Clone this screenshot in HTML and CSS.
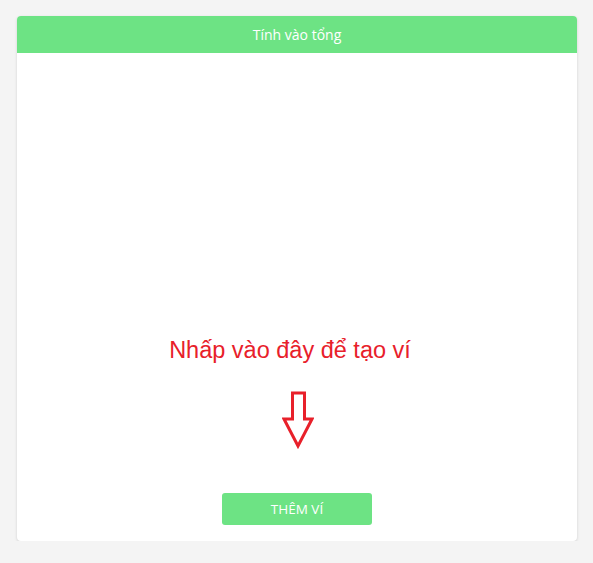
FILE: index.html
```html
<!DOCTYPE html>
<html lang="vi">
<head>
<meta charset="utf-8">
<link rel="stylesheet" href="styles.css">
</head>
<body>
<div class="card">
  <div class="card-header">Tính vào tổng</div>
  <div class="card-body">
    <div class="hint">Nhấp vào đây để tạo ví</div>
    <svg class="arrow" width="32" height="58" viewBox="0 0 32 58">
      <polygon points="10.5,2 22.5,2 22.5,28 30,28 16,55 2,28 10.5,28" fill="none" stroke="#e8202a" stroke-width="3" stroke-linejoin="miter"/>
    </svg>
    <button class="add-btn">THÊM VÍ</button>
  </div>
</div>
</body>
</html>
```

FILE: styles.css
```css
html, body {
  margin: 0;
  padding: 0;
  background: #f4f4f4;
}
body {
  padding: 16px 16px 0 17px;
  font-family: "Open Sans", "Noto Sans", sans-serif;
}
.card {
  width: 560px;
  height: 525px;
  background: #fff;
  border-radius: 4px;
  box-shadow: 0 1px 3px rgba(0,0,0,0.15);
  display: flex;
  flex-direction: column;
  overflow: hidden;
}
.card-header {
  height: 37px;
  background: #6de384;
  color: #fff;
  font-size: 14px;
  line-height: 37px;
  text-align: center;
}
.card-body {
  flex: 1;
  display: flex;
  flex-direction: column;
  align-items: center;
  padding-top: 284px;
}
.hint {
  font-family: "Liberation Sans", Arial, sans-serif;
  font-size: 23.5px;
  line-height: 27px;
  color: #e8202a;
  margin-right: 14px;
}
.arrow {
  display: block;
  margin-top: 27px;
  margin-left: 2px;
}
.add-btn {
  margin-top: 44px;
  width: 150px;
  height: 32px;
  border: none;
  border-radius: 3px;
  background: #6de384;
  color: #fff;
  font-family: "Open Sans", "Noto Sans", sans-serif;
  font-size: 13.5px;
  padding: 0;
}
```
